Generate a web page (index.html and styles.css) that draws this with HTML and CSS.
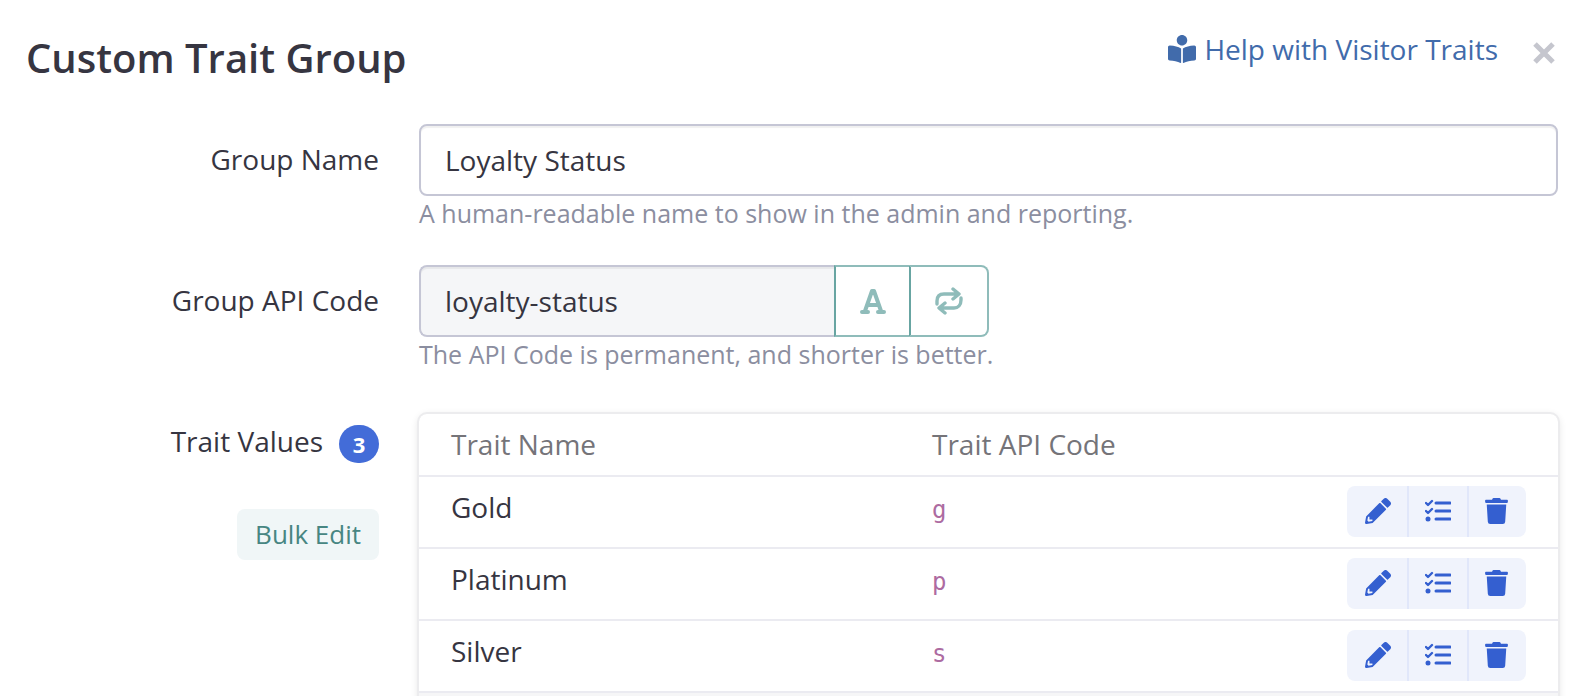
FILE: index.html
```
<!DOCTYPE html>
<html lang="en">
<head>
<meta charset="UTF-8">
<meta name="viewport" content="width=device-width, initial-scale=1.0">
<title>Custom Trait Group</title>
<link rel="stylesheet" href="styles.css">
</head>
<body>
<!-- icon set -->
<svg class="sprite" aria-hidden="true">
  <symbol id="icon-reader" viewBox="0 0 512 512">
    <path d="M352 96c0 53-43 96-96 96s-96-43-96-96S203 0 256 0s96 43 96 96zM240 248v256c0 5-5 9-10 7-58-27-125-43-200-47-17-1-30-14-30-31V223c0-18 15-32 33-31 88 4 153 22 207 56zM272 248c54-34 119-52 207-56 18-1 33 13 33 31v210c0 17-13 30-30 31-75 4-142 20-200 47-5 2-10-2-10-7V248z"/>
  </symbol>
  <symbol id="icon-close" viewBox="0 0 24 24">
    <path d="M3 3l18 18M21 3L3 21" fill="none" stroke="currentColor" stroke-width="5"/>
  </symbol>
  <symbol id="icon-font" viewBox="0 0 26 26">
    <path d="M2 24h6M18 24h6M5 23L12 3h2l7 20M8 17h10" fill="none" stroke="currentColor" stroke-width="4" stroke-linecap="round" stroke-linejoin="round"/>
  </symbol>
  <symbol id="icon-repeat" viewBox="0 0 28 28">
    <path d="M2 17v-3c0-5 3-7 7-7h14M18 2l6 5-6 5M26 11v2c0 5-3 8-7 8H5M10 16l-6 5 6 5" fill="none" stroke="currentColor" stroke-width="3.4" stroke-linecap="round" stroke-linejoin="round"/>
  </symbol>
  <symbol id="icon-pencil" viewBox="0 0 512 512">
    <path d="M498 142l-47 47c-5 5-12 5-17 0L323 78c-5-5-5-12 0-17l47-47c19-19 49-19 68 0l60 60c19 19 19 49 0 68zM284 100L22 362 0 485c-3 16 12 31 28 28l122-22 262-262c5-5 5-12 0-17L301 100c-5-5-12-5-17 0zM88 424v-56h-28l-14 76 24 24 76-14v-30H88z" fill-rule="evenodd"/>
  </symbol>
  <symbol id="icon-tasks" viewBox="0 0 26 26">
    <path d="M1 5l2 2 4-4M1 13l2 2 4-4" fill="none" stroke="currentColor" stroke-width="2.4" stroke-linecap="round" stroke-linejoin="round"/>
    <circle cx="3" cy="21" r="2.5"/>
    <path d="M11 5h14M11 13h14M11 21h14" fill="none" stroke="currentColor" stroke-width="3" stroke-linecap="round"/>
  </symbol>
  <symbol id="icon-trash" viewBox="0 0 448 512">
    <path d="M432 32H312l-9-19a24 24 0 0 0-22-13H167a24 24 0 0 0-22 13l-9 19H16A16 16 0 0 0 0 48v32a16 16 0 0 0 16 16h416a16 16 0 0 0 16-16V48a16 16 0 0 0-16-16zM32 128h384l-21 339a48 48 0 0 1-48 45H101a48 48 0 0 1-48-45z"/>
  </symbol>
</svg>

<form class="trait-form">
  <header class="form-header">
    <h1>Custom Trait Group</h1>
    <div class="header-actions">
      <a class="help-link" href="#"><svg class="icon-28"><use href="#icon-reader"/></svg>Help with Visitor Traits</a>
      <button class="close" type="button" aria-label="Close"><svg><use href="#icon-close"/></svg></button>
    </div>
  </header>

  <div class="form-row">
    <label class="row-label" for="groupName">Group Name</label>
    <div class="row-field">
      <input class="text-input" type="text" id="groupName" value="Loyalty Status">
      <p class="hint">A human-readable name to show in the admin and reporting.</p>
    </div>
  </div>

  <div class="form-row">
    <label class="row-label" for="groupCode">Group API Code</label>
    <div class="row-field">
      <div class="input-group">
        <input class="text-input" type="text" id="groupCode" value="loyalty-status" readonly>
        <button class="addon" type="button" aria-label="Edit code"><svg class="icon-26"><use href="#icon-font"/></svg></button>
        <button class="addon" type="button" aria-label="Regenerate code"><svg class="icon-28"><use href="#icon-repeat"/></svg></button>
      </div>
      <p class="hint">The API Code is permanent, and shorter is better.</p>
    </div>
  </div>

  <div class="form-row values-row">
    <div class="row-label">
      <div class="values-title">Trait Values <span class="badge">3</span></div>
      <button class="bulk-edit" type="button">Bulk Edit</button>
    </div>
    <div class="row-field values-card">
      <table class="traits">
        <thead>
          <tr><th class="col-name">Trait Name</th><th>Trait API Code</th><th class="col-actions"></th></tr>
        </thead>
        <tbody>
          <tr>
            <td>Gold</td>
            <td><code>g</code></td>
            <td>
              <div class="actions">
                <button type="button" aria-label="Edit Gold"><svg><use href="#icon-pencil"/></svg></button>
                <button type="button" aria-label="Rules for Gold"><svg><use href="#icon-tasks"/></svg></button>
                <button type="button" aria-label="Delete Gold"><svg class="icon-trash"><use href="#icon-trash"/></svg></button>
              </div>
            </td>
          </tr>
          <tr>
            <td>Platinum</td>
            <td><code>p</code></td>
            <td>
              <div class="actions">
                <button type="button" aria-label="Edit Platinum"><svg><use href="#icon-pencil"/></svg></button>
                <button type="button" aria-label="Rules for Platinum"><svg><use href="#icon-tasks"/></svg></button>
                <button type="button" aria-label="Delete Platinum"><svg class="icon-trash"><use href="#icon-trash"/></svg></button>
              </div>
            </td>
          </tr>
          <tr>
            <td>Silver</td>
            <td><code>s</code></td>
            <td>
              <div class="actions">
                <button type="button" aria-label="Edit Silver"><svg><use href="#icon-pencil"/></svg></button>
                <button type="button" aria-label="Rules for Silver"><svg><use href="#icon-tasks"/></svg></button>
                <button type="button" aria-label="Delete Silver"><svg class="icon-trash"><use href="#icon-trash"/></svg></button>
              </div>
            </td>
          </tr>
        </tbody>
      </table>
      <div class="card-footer"></div>
    </div>
  </div>
</form>
</body>
</html>
```
FILE: styles.css
```
* {
    box-sizing: border-box;
}
body {
    margin: 0;
    background: #fff;
    color: #363541;
    font-family: "Open Sans", sans-serif;
    font-size: 28px;
    line-height: 40px;
}
button, input {
    font: inherit;
    color: inherit;
    margin: 0;
}
button {
    border: 0;
    padding: 0;
    background: none;
    cursor: pointer;
}
svg {
    fill: currentColor;
    display: block;
}
.sprite {
    position: absolute;
    width: 0;
    height: 0;
}
.trait-form {
    height: 100vh;
    overflow: hidden;
    padding: 29px 28px 0 26px;
}
.form-header {
    display: flex;
    justify-content: space-between;
    align-items: flex-start;
    height: 95px;
    padding-right: 2px;
}
h1 {
    margin: 0;
    font-size: 40px;
    font-weight: 600;
    line-height: 58px;
}
.header-actions {
    display: flex;
    align-items: center;
    gap: 34px;
}
.help-link {
    display: flex;
    align-items: center;
    gap: 8px;
    color: #416bab;
    text-decoration: none;
}
.icon-28 {
    width: 28px;
    height: 28px;
}
.icon-26 {
    width: 26px;
    height: 26px;
}
.close {
    padding-top: 8px;
    color: #c5c6ce;
}
.close svg {
    width: 24px;
    height: 24px;
}
.form-row {
    display: flex;
    gap: 40px;
    margin-bottom: 35px;
}
.row-label {
    flex: 0 0 353px;
    padding-top: 15px;
    text-align: right;
}
.row-field {
    flex: 1;
    min-width: 0;
}
.text-input {
    display: block;
    width: 100%;
    height: 72px;
    padding: 0 24px;
    border: 2px solid #c5c6d5;
    border-radius: 8px;
    background: #fff;
    box-shadow: inset 0 2px 1px rgba(0, 0, 0, 0.06);
}
.text-input[readonly] {
    background: #f5f6f8;
}
.hint {
    margin: 0;
    color: #8b8ea0;
    font-size: 25px;
    line-height: 34px;
}
.input-group {
    display: flex;
    width: 570px;
}
.input-group .text-input {
    flex: 1;
    min-width: 0;
    border-right: 0;
    border-radius: 8px 0 0 8px;
}
.addon {
    display: flex;
    align-items: center;
    justify-content: center;
    width: 75px;
    height: 72px;
    border: 2px solid #8fbcba;
    border-left-color: #68a5a2;
    color: #8fbcba;
}
.addon:not(:last-child) {
    border-right: 0;
}
.addon:last-child {
    width: 80px;
    border-radius: 0 8px 8px 0;
}
.values-row {
    padding-top: 8px;
}
.values-row .row-label {
    padding-top: 7px;
}
.values-title {
    display: flex;
    justify-content: flex-end;
    gap: 16px;
}
.badge {
    width: 40px;
    height: 38px;
    margin-top: 4px;
    border-radius: 20px;
    background: #436cd8;
    color: #fff;
    font-size: 22px;
    font-weight: 700;
    line-height: 38px;
    text-align: center;
}
.bulk-edit {
    height: 51px;
    margin-top: 46px;
    padding: 0 18px 2px;
    border-radius: 8px;
    background: #f0f6f7;
    color: #478682;
    font-size: 26px;
}
.values-card {
    border-radius: 8px;
    box-shadow: 0 0 0 2px #ececee, 0 2px 8px rgba(0, 0, 0, 0.14);
}
.traits {
    width: 100%;
    border-spacing: 0;
}
.traits th, .traits td {
    border-bottom: 2px solid #ebebf1;
    text-align: left;
}
.traits th {
    height: 63px;
    padding: 0 32px 2px;
    color: #757479;
    font-weight: 400;
}
.traits td {
    height: 72px;
    padding: 9px 32px 0;
    line-height: 42px;
    vertical-align: top;
}
.col-name {
    width: 481px;
}
.col-actions {
    width: 243px;
}
code {
    color: #ad6ba1;
    font-family: "DejaVu Sans Mono", monospace;
    font-size: 24px;
}
.actions {
    display: flex;
    height: 51px;
    border-radius: 8px;
    background: #f0f3fc;
    color: #345fd0;
}
.actions button {
    display: flex;
    align-items: center;
    padding: 0 16px 2px;
}
.actions button:first-child {
    padding-left: 18px;
}
.actions button + button {
    border-left: 2px solid #e1e7fa;
}
.actions svg {
    width: 26px;
    height: 26px;
}
.actions .icon-trash {
    width: 23px;
}
.card-footer {
    height: 60px;
    background: #f6f6f7;
}
```
